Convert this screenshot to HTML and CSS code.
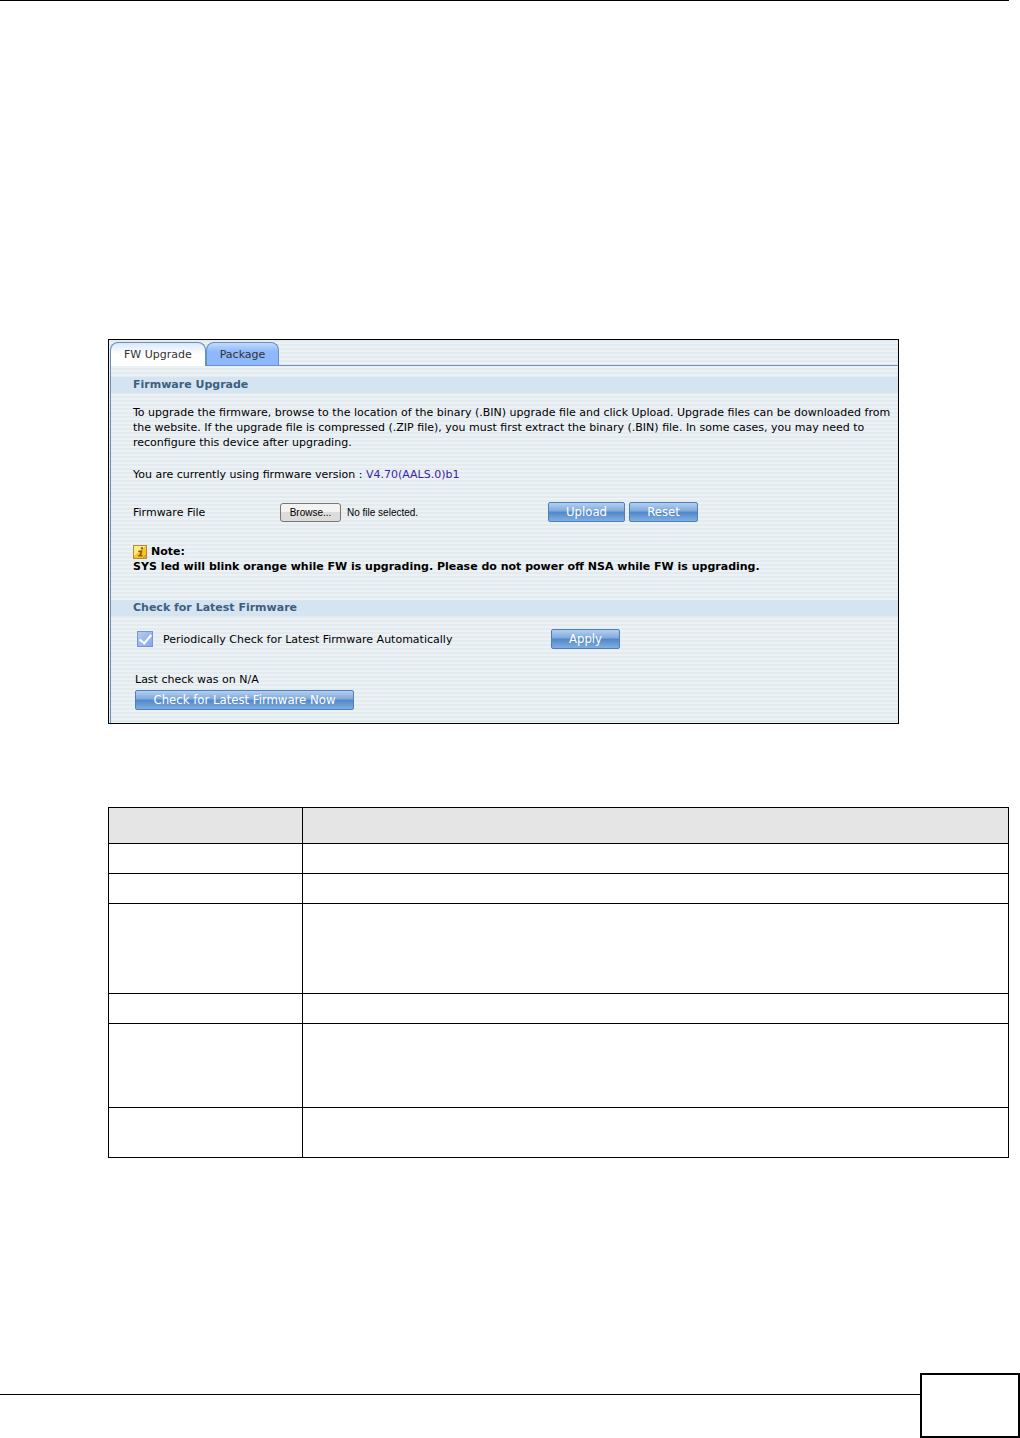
FILE: index.html
```html
<!DOCTYPE html>
<html lang="en">
<head>
    <meta charset="UTF-8">
    <meta name="viewport" content="width=device-width, initial-scale=1.0">
    <title>FW Upgrade</title>
    <link rel="stylesheet" href="styles.css">
</head>
<body>

    <main class="content">
        <div class="panel">
            <!-- Tabs -->
            <nav class="tabs">
                <button type="button" class="tab active">FW Upgrade</button>
                <button type="button" class="tab">Package</button>
            </nav>

            <div class="panel-body">
                <!-- Firmware Upgrade -->
                <h2 class="section-title">Firmware Upgrade</h2>
                <div class="section upgrade">
                    <p class="intro">To upgrade the firmware, browse to the location of the binary (.BIN) upgrade file and click Upload. Upgrade files can be downloaded from the website. If the upgrade file is compressed (.ZIP file), you must first extract the binary (.BIN) file. In some cases, you may need to reconfigure this device after upgrading.</p>
                    <p class="version">You are currently using firmware version : <span class="version-number">V4.70(AALS.0)b1</span></p>

                    <div class="form-row">
                        <label class="file-label" for="firmwareFile">Firmware File</label>
                        <div class="file-picker">
                            <input type="file" id="firmwareFile" hidden onchange="showFileName(this)">
                            <button type="button" class="browse" onclick="document.getElementById('firmwareFile').click()">Browse...</button>
                            <span id="fileName">No file selected.</span>
                        </div>
                        <div class="actions">
                            <button type="button" class="btn upload">Upload</button>
                            <button type="button" class="btn">Reset</button>
                        </div>
                    </div>

                    <div class="note">
                        <div class="note-title">
                            <svg width="14" height="14" viewBox="0 0 14 14">
                                <rect x="0.5" y="0.5" width="13" height="13" fill="#f7c51e" stroke="#b98a2b"/>
                                <path d="M1 1h12L1 11z" fill="#fde88a"/>
                                <path d="M8 2.2h2v2H7.6zM5.5 5.5h4L8.3 10h1.4l-.4 1.4H5l.4-1.4h1l.9-3.1H5.1z" fill="#8a5a10"/>
                                <path d="M10 13l3-3v3z" fill="#fff3b5" stroke="#b98a2b"/>
                            </svg>
                            <span>Note:</span>
                        </div>
                        <p>SYS led will blink orange while FW is upgrading. Please do not power off NSA while FW is upgrading.</p>
                    </div>
                </div>

                <!-- Check for Latest Firmware -->
                <h2 class="section-title">Check for Latest Firmware</h2>
                <div class="section check">
                    <div class="form-row">
                        <div class="check-option">
                            <input type="checkbox" id="autoCheck" checked>
                            <label for="autoCheck">Periodically Check for Latest Firmware Automatically</label>
                        </div>
                        <button type="button" class="btn">Apply</button>
                    </div>
                    <p class="last-check">Last check was on N/A</p>
                    <button type="button" class="btn check-now">Check for Latest Firmware Now</button>
                </div>
            </div>
        </div>

        <table class="labels">
            <thead>
                <tr class="head"><th></th><th></th></tr>
            </thead>
            <tbody>
                <tr class="single"><td></td><td></td></tr>
                <tr class="single"><td></td><td></td></tr>
                <tr class="large"><td></td><td></td></tr>
                <tr class="single"><td></td><td></td></tr>
                <tr class="medium"><td></td><td></td></tr>
                <tr class="double"><td></td><td></td></tr>
            </tbody>
        </table>
    </main>

    <footer class="footer">
        <div class="footer-line"></div>
        <div class="page-box"></div>
    </footer>

    <script>
        function showFileName(input) {
            const file = input.files[0];
            document.getElementById("fileName").textContent = file ? file.name : "No file selected.";
        }
    </script>

</body>
</html>
```

FILE: styles.css
```css
* {
    box-sizing: border-box;
}

body {
    display: flex;
    flex-direction: column;
    min-height: 100vh;
    margin: 0;
    background: #fff;
    color: #000;
    font-family: Verdana, "DejaVu Sans", sans-serif;
    font-size: 11px;
    line-height: 15px;
}

p, h2 {
    margin: 0;
}

button {
    font-family: inherit;
    cursor: pointer;
}

.content {
    margin-right: 11px;
    padding: 338px 0 0 108px;
    border-top: 1px solid #000;
}

.panel {
    margin-right: 110px;
    padding: 2px 0 0 1px;
    border: 1px solid #000;
    background: repeating-linear-gradient(#e4ebef 0, #e4ebef 2px, #ebf1f4 2px, #ebf1f4 4px);
}

/* Tabs */
.tabs {
    display: flex;
    border-bottom: 1px solid #6790c4;
}

.tab {
    height: 23px;
    padding: 0 13px;
    border: 1px solid #6790c4;
    border-bottom: none;
    border-radius: 8px 8px 0 0;
    background: linear-gradient(#c3d9fb, #8db8fb 40%);
    color: #333;
    font-size: 11px;
}

.tab.active {
    height: 24px;
    margin-bottom: -1px;
    background: linear-gradient(#dde8f8, #fff 50%);
}

.panel-body {
    padding-top: 11px;
    border-left: 1px solid #6790c4;
}

.section-title {
    padding-left: 22px;
    background: #d4e5f1;
    color: #3d607f;
    font-size: 11px;
    line-height: 16px;
}

.section {
    padding-left: 22px;
}

.upgrade {
    padding-top: 12px;
    padding-bottom: 26px;
}

.version {
    margin-top: 17px;
}

.version-number {
    color: #3a1fa8;
}

.form-row {
    display: flex;
    align-items: center;
}

.upgrade .form-row {
    margin-top: 20px;
}

.file-label {
    width: 147px;
}

.file-picker {
    display: flex;
    align-items: center;
    gap: 6px;
    width: 268px;
    font-family: "Liberation Sans", Arial, sans-serif;
    font-size: 10px;
}

.browse {
    width: 61px;
    height: 19px;
    padding: 0;
    border: 1px solid #777;
    border-radius: 3px;
    background: linear-gradient(#f3f3f3 50%, #dcdcdc 50%);
    font-size: 10px;
}

.actions {
    display: flex;
    gap: 4px;
}

.btn {
    width: 69px;
    height: 20px;
    padding: 0;
    border: 1px solid #4c80bd;
    border-radius: 2px;
    background: linear-gradient(#b4cfee, #7fa9dc 45%, #4f87c9 50%, #82aee0);
    color: #fff;
    font-family: Tahoma, "DejaVu Sans Condensed", sans-serif;
    font-size: 13px;
    line-height: 18px;
}

.btn.upload {
    width: 77px;
}

.note {
    margin-top: 22px;
    font-weight: bold;
}

.note-title {
    display: flex;
    align-items: center;
    gap: 4px;
}

/* Check for Latest Firmware */
.check {
    padding-top: 13px;
    padding-bottom: 13px;
    padding-left: 24px;
}

.check-option {
    display: flex;
    align-items: center;
    gap: 10px;
    width: 416px;
    padding-left: 2px;
}

.check-option input {
    appearance: none;
    width: 16px;
    height: 16px;
    margin: 0;
    border: 1px solid #7896cf;
    background: linear-gradient(135deg, #b5cbf2, #86a9e3);
    display: grid;
    place-items: center;
}

.check-option input:checked::before {
    content: "";
    width: 5px;
    height: 10px;
    margin-bottom: 3px;
    border: solid #fff;
    border-width: 0 2px 2px 0;
    transform: rotate(40deg);
}

.last-check {
    margin-top: 23px;
}

.check-now {
    width: 219px;
    margin-top: 3px;
}

/* Label table */
.labels {
    width: 100%;
    margin-top: 83px;
    border-collapse: collapse;
    table-layout: fixed;
}

.labels th, .labels td {
    padding: 0;
    border: 1px solid #000;
}

.labels th {
    background: #e5e5e5;
}

.labels th:first-child {
    width: 194px;
}

.head {
    height: 36px;
}

.single {
    height: 30px;
}

.double {
    height: 50px;
}

.medium {
    height: 84px;
}

.large {
    height: 90px;
}

/* Footer */
.footer {
    display: flex;
    margin-top: auto;
}

.footer-line {
    flex: 1;
    margin-top: 21px;
    border-top: 1px solid #000;
}

.page-box {
    width: 100px;
    height: 65px;
    border: 2px solid #000;
}
```
